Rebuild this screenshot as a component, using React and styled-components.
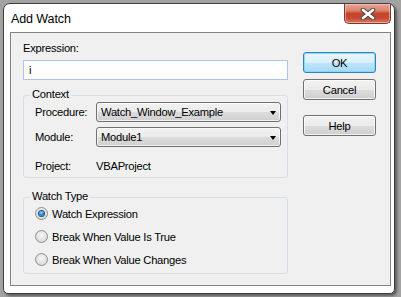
import React from 'react';
import styled, { createGlobalStyle } from 'styled-components';

const FONT = `"Liberation Sans", Arial, sans-serif`;

const Global = createGlobalStyle`
  html, body { margin: 0; padding: 0; }
  body {
    background: #a3a3a3;
    width: 401px;
    height: 297px;
    overflow: hidden;
    font-family: ${FONT};
  }
`;

const Page = styled.div`
  padding: 3px 0 0 3px;
`;

const Window = styled.div`
  box-sizing: border-box;
  width: 392px;
  height: 291px;
  background: #ffffff;
  border: 1px solid #3f3f3f;
  border-radius: 7px 7px 5px 5px;
  box-shadow: 2px 2px 3px rgba(0, 0, 0, 0.45);
  padding: 0 3px 7px 6px;
  display: flex;
  flex-direction: column;
`;

const TitleBar = styled.div`
  height: 28px;
  display: flex;
  justify-content: space-between;
  align-items: flex-start;
`;

const Title = styled.div`
  margin: 7px 0 0 1px;
  font-size: 12.5px;
  line-height: 16px;
  letter-spacing: -0.1px;
  color: #000;
  text-shadow: 0 0 6px #fff, 0 0 3px #fff;
`;

const CloseButton = styled.div`
  box-sizing: border-box;
  width: 47px;
  height: 20px;
  border: 1px solid #7c3a2e;
  border-top: none;
  border-radius: 0 0 5px 5px;
  background: linear-gradient(#e8a595 0%, #d9826e 35%, #c2432c 50%, #c64a32 75%, #da7b5e 100%);
  box-shadow: inset 0 0 0 1px rgba(255, 210, 200, 0.55);
  display: flex;
  align-items: center;
  justify-content: center;
`;

const Client = styled.div`
  flex: 1;
  background: #f0f0f0;
  border: 1px solid #838383;
  display: flex;
  padding: 7px 0 0 12px;
  font-size: 11.2px;
  letter-spacing: -0.25px;
  color: #000;
`;

const LeftColumn = styled.div`
  width: 265px;
  display: flex;
  flex-direction: column;
`;

const RightColumn = styled.div`
  margin-left: 15px;
  padding-top: 12px;
  display: flex;
  flex-direction: column;
`;

const Label = styled.div`
  line-height: 16px;
  height: 16px;
  white-space: nowrap;
`;

const TextInput = styled.div`
  box-sizing: border-box;
  margin-top: 4px;
  height: 20px;
  border: 1px solid #a9c6e6;
  background: #fff;
  padding: 0 5px;
  line-height: 18px;
`;

const Group = styled.div`
  box-sizing: border-box;
  margin-top: ${p => p.$top}px;
  border: 1px solid #d5dfe5;
  border-radius: 3px;
  padding: 0 5px ${p => p.$bottom}px 11px;
  display: flex;
  flex-direction: column;
`;

const Caption = styled.div`
  align-self: flex-start;
  margin: -9px 0 0 -5px;
  padding: 0 2px;
  background: #f0f0f0;
  line-height: 15px;
  height: 15px;
`;

const FieldRow = styled.div`
  display: flex;
  align-items: center;
  margin-top: ${p => p.$top || 0}px;
  height: ${p => p.$h || 20}px;
`;

const FieldLabel = styled.div`
  width: 61px;
  flex: none;
  line-height: 16px;
`;

const Combo = styled.div`
  box-sizing: border-box;
  width: 185px;
  height: 20px;
  border: 1px solid #707070;
  border-radius: 3px;
  background: linear-gradient(#f2f2f2 0%, #ebebeb 50%, #dddddd 51%, #cfcfcf 100%);
  box-shadow: inset 0 0 0 1px rgba(255, 255, 255, 0.7);
  display: flex;
  align-items: center;
  justify-content: space-between;
  padding: 0 4px 0 4px;
  line-height: 16px;
`;

const Arrow = styled.span`
  width: 0;
  height: 0;
  border-left: 3.5px solid transparent;
  border-right: 3.5px solid transparent;
  border-top: 4px solid #000;
  margin-top: 1px;
`;

const RadioRow = styled.div`
  display: flex;
  align-items: center;
  height: 23px;
  margin-top: ${p => p.$top || 0}px;
`;

const RadioCircle = styled.span`
  box-sizing: border-box;
  width: 13px;
  height: 13px;
  border-radius: 50%;
  border: 1px solid #8d8f8f;
  background: radial-gradient(circle at 50% 40%, #f6f6f6 0%, #e2e2e2 55%, #cfcfcf 100%);
  display: flex;
  align-items: center;
  justify-content: center;
  margin-right: 4px;
  flex: none;
  &::after {
    content: '';
    width: 5px;
    height: 5px;
    border-radius: 50%;
    display: ${p => (p.$checked ? 'block' : 'none')};
    background: radial-gradient(circle at 45% 35%, #8fd3ff 0%, #2a8ad4 50%, #0f4f8c 100%);
    box-shadow: 0 0 0 1px #1c5180;
  }
`;

const Button = styled.div`
  box-sizing: border-box;
  width: 73px;
  height: 21px;
  margin-top: ${p => p.$top || 0}px;
  border: 1px solid ${p => (p.$default ? '#3c7fb1' : '#707070')};
  border-radius: 3px;
  background: ${p =>
    p.$default
      ? 'linear-gradient(#eaf6fd 0%, #d9f0fc 50%, #bee6fd 51%, #a7d9f5 100%)'
      : 'linear-gradient(#f2f2f2 0%, #ebebeb 50%, #dddddd 51%, #cfcfcf 100%)'};
  box-shadow: inset 0 0 0 1px ${p => (p.$default ? 'rgba(120, 220, 250, 0.9)' : 'rgba(255,255,255,0.75)')};
  display: flex;
  align-items: center;
  justify-content: center;
  line-height: 16px;
`;

const CloseGlyph = () => (
  <svg width="16" height="12" viewBox="0 0 16 12">
    <path d="M3 2 L13 10 M13 2 L3 10" stroke="#4a4a4a" strokeWidth="4.6" strokeLinecap="round" />
    <path d="M3 2 L13 10 M13 2 L3 10" stroke="#ffffff" strokeWidth="2.6" strokeLinecap="round" />
  </svg>
);

export default function App() {
  return (
    <>
      <Global />
      <Page>
        <Window>
          <TitleBar>
            <Title>Add Watch</Title>
            <CloseButton>
              <CloseGlyph />
            </CloseButton>
          </TitleBar>
          <Client>
            <LeftColumn>
              <Label>Expression:</Label>
              <TextInput>i</TextInput>
              <Group $top={15} $bottom={3}>
                <Caption>Context</Caption>
                <FieldRow>
                  <FieldLabel>Procedure:</FieldLabel>
                  <Combo>
                    <span>Watch_Window_Example</span>
                    <Arrow />
                  </Combo>
                </FieldRow>
                <FieldRow $top={5}>
                  <FieldLabel>Module:</FieldLabel>
                  <Combo>
                    <span>Module1</span>
                    <Arrow />
                  </Combo>
                </FieldRow>
                <FieldRow $top={11} $h={16}>
                  <FieldLabel>Project:</FieldLabel>
                  <span>VBAProject</span>
                </FieldRow>
              </Group>
              <Group $top={19} $bottom={2}>
                <Caption>Watch Type</Caption>
                <RadioRow $top={-2}>
                  <RadioCircle $checked />
                  <span>Watch Expression</span>
                </RadioRow>
                <RadioRow>
                  <RadioCircle />
                  <span>Break When Value Is True</span>
                </RadioRow>
                <RadioRow>
                  <RadioCircle />
                  <span>Break When Value Changes</span>
                </RadioRow>
              </Group>
            </LeftColumn>
            <RightColumn>
              <Button $default>OK</Button>
              <Button $top={6}>Cancel</Button>
              <Button $top={15}>Help</Button>
            </RightColumn>
          </Client>
        </Window>
      </Page>
    </>
  );
}
